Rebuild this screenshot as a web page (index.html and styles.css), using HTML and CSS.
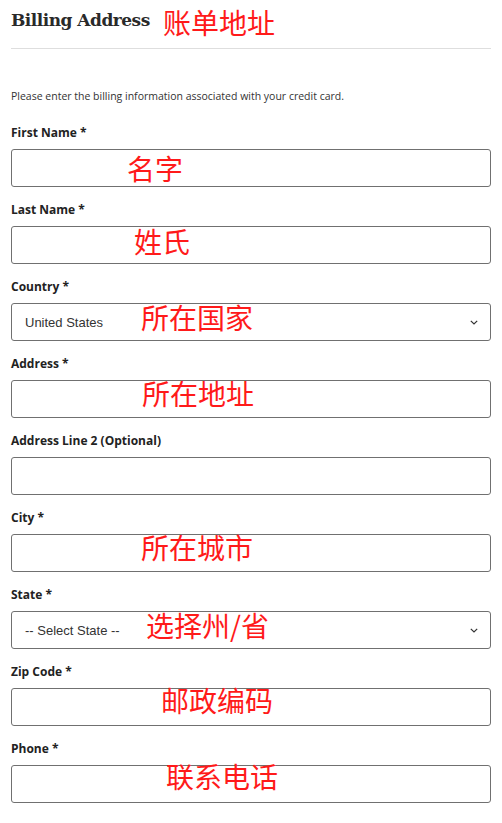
FILE: index.html
```html
<!DOCTYPE html>
<html lang="en">
<head>
<meta charset="utf-8">
<title>Billing Address</title>
<link rel="stylesheet" href="styles.css">
</head>
<body>
<div class="page">
  <header class="head">
    <h1 class="title">Billing Address</h1>
    <span class="note note-title">账单地址</span>
  </header>
  <p class="desc">Please enter the billing information associated with your credit card.</p>

  <div class="field">
    <div class="label">First Name *</div>
    <div class="input"></div>
    <span class="note note-first">名字</span>
  </div>
  <div class="field">
    <div class="label">Last Name *</div>
    <div class="input"></div>
    <span class="note note-last">姓氏</span>
  </div>
  <div class="field">
    <div class="label">Country *</div>
    <div class="input select"><span>United States</span>
      <svg class="chev" width="8" height="5" viewBox="0 0 8 5"><path d="M0.8 0.8 L4 4 L7.2 0.8" fill="none" stroke="#333" stroke-width="1.2"/></svg>
    </div>
    <span class="note note-country">所在国家</span>
  </div>
  <div class="field">
    <div class="label">Address *</div>
    <div class="input"></div>
    <span class="note note-address">所在地址</span>
  </div>
  <div class="field">
    <div class="label">Address Line 2 (Optional)</div>
    <div class="input"></div>
  </div>
  <div class="field">
    <div class="label">City *</div>
    <div class="input"></div>
    <span class="note note-city">所在城市</span>
  </div>
  <div class="field">
    <div class="label">State *</div>
    <div class="input select"><span>-- Select State --</span>
      <svg class="chev" width="8" height="5" viewBox="0 0 8 5"><path d="M0.8 0.8 L4 4 L7.2 0.8" fill="none" stroke="#333" stroke-width="1.2"/></svg>
    </div>
    <span class="note note-state">选择州/省</span>
  </div>
  <div class="field">
    <div class="label">Zip Code *</div>
    <div class="input"></div>
    <span class="note note-zip">邮政编码</span>
  </div>
  <div class="field">
    <div class="label">Phone *</div>
    <div class="input"></div>
    <span class="note note-phone">联系电话</span>
  </div>
</div>
</body>
</html>
```
FILE: styles.css
```css
* { box-sizing: border-box; }
html, body { margin: 0; padding: 0; background: #fff; }
body { font-family: "Liberation Sans", Arial, sans-serif; color: #222; }
.page { padding: 0 11px; width: 502px; }
.head {
  position: relative;
  padding-top: 8px;
  padding-bottom: 16px;
  border-bottom: 1px solid #dedede;
}
.title {
  margin: 0;
  font-family: "DejaVu Serif", "Liberation Serif", serif;
  font-weight: bold;
  font-size: 17px;
  line-height: 24px;
  letter-spacing: -0.5px;
  color: #2a2a2a;
}
.desc {
  margin: 40px 0 22px;
  font-family: "Open Sans", "Liberation Sans", sans-serif;
  font-size: 10.5px;
  line-height: 14px;
  color: #333;
}
.field { position: relative; margin-bottom: 15px; }
.label {
  font-family: "Open Sans", "Liberation Sans", sans-serif;
  font-size: 12px;
  font-weight: bold;
  line-height: 16px;
  margin-bottom: 8px;
  color: #222;
}
.input {
  height: 38px;
  border: 1px solid #707070;
  border-radius: 3px;
  background: #fff;
}
.select {
  display: flex;
  align-items: center;
  justify-content: space-between;
  padding: 0 12px 0 13px;
  font-size: 13px;
  color: #333;
}
.chev { display: block; }
.note {
  position: absolute;
  font-family: "Noto Sans CJK SC", sans-serif;
  font-size: 28px;
  line-height: 32px;
  color: #ff1a1a;
  white-space: nowrap;
}
.note-title { left: 152px; top: 6px; }
.note-first { left: 116px; top: 27px; }
.note-last { left: 123px; top: 23px; }
.note-country { left: 130px; top: 22px; }
.note-address { left: 131px; top: 21px; }
.note-city { left: 130px; top: 21px; }
.note-state { left: 135px; top: 22px; }
.note-zip { left: 150px; top: 20px; }
.note-phone { left: 155px; top: 19px; }
```
